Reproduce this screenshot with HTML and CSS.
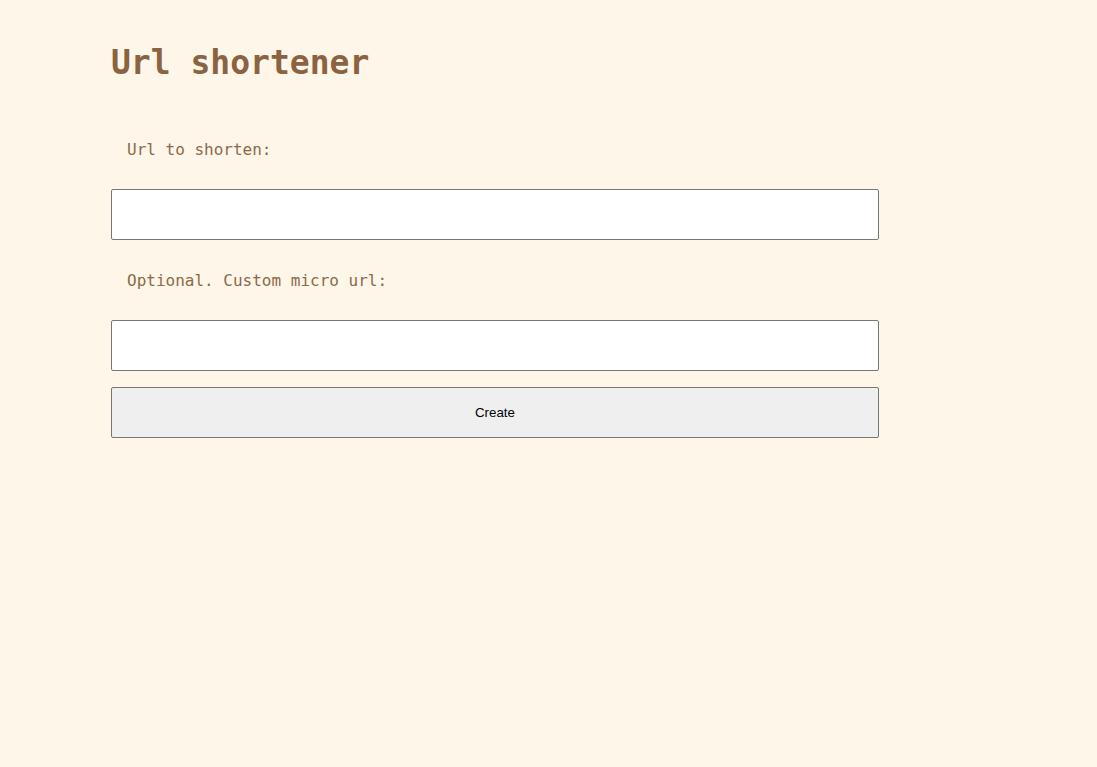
FILE: index.html
```html
<!DOCTYPE html>
<html lang="en">
<head>
<meta charset="utf-8">
<title>Url shortener</title>
<link rel="stylesheet" href="styles.css">
</head>
<body>
<main class="page">
  <h1 class="title">Url shortener</h1>
  <form class="form">
    <label class="label" for="url">Url to shorten:</label>
    <input class="field" id="url" type="text">
    <label class="label" for="custom">Optional. Custom micro url:</label>
    <input class="field" id="custom" type="text">
    <button class="btn" type="button">Create</button>
  </form>
</main>
</body>
</html>
```

FILE: styles.css
```css
html, body {
  margin: 0;
  padding: 0;
  background: #fef6e9;
  min-height: 100%;
}
.page {
  width: 768px;
  margin-left: 111px;
  padding-top: 43px;
}
.title {
  margin: 0 0 26px 0;
  font-family: "DejaVu Sans Mono", "Liberation Mono", monospace;
  font-weight: bold;
  font-size: 33px;
  line-height: 40px;
  color: #8b6340;
}
.form {
  display: flex;
  flex-direction: column;
}
.label {
  display: block;
  padding: 31px 16px 29px;
  font-family: "DejaVu Sans Mono", "Liberation Mono", monospace;
  font-size: 16px;
  line-height: 20px;
  color: #8b6a4a;
}
.field {
  box-sizing: border-box;
  width: 768px;
  height: 51px;
  margin: 0;
  border: 1px solid #767676;
  border-radius: 2px;
  background: #fff;
  padding: 0 4px;
}
.btn {
  box-sizing: border-box;
  width: 768px;
  height: 51px;
  margin: 16px 0 0 0;
  border: 1px solid #767676;
  border-radius: 2px;
  background: #efefef;
  color: #000;
  font-family: "Liberation Sans", Arial, sans-serif;
  font-size: 13.33px;
}
```
